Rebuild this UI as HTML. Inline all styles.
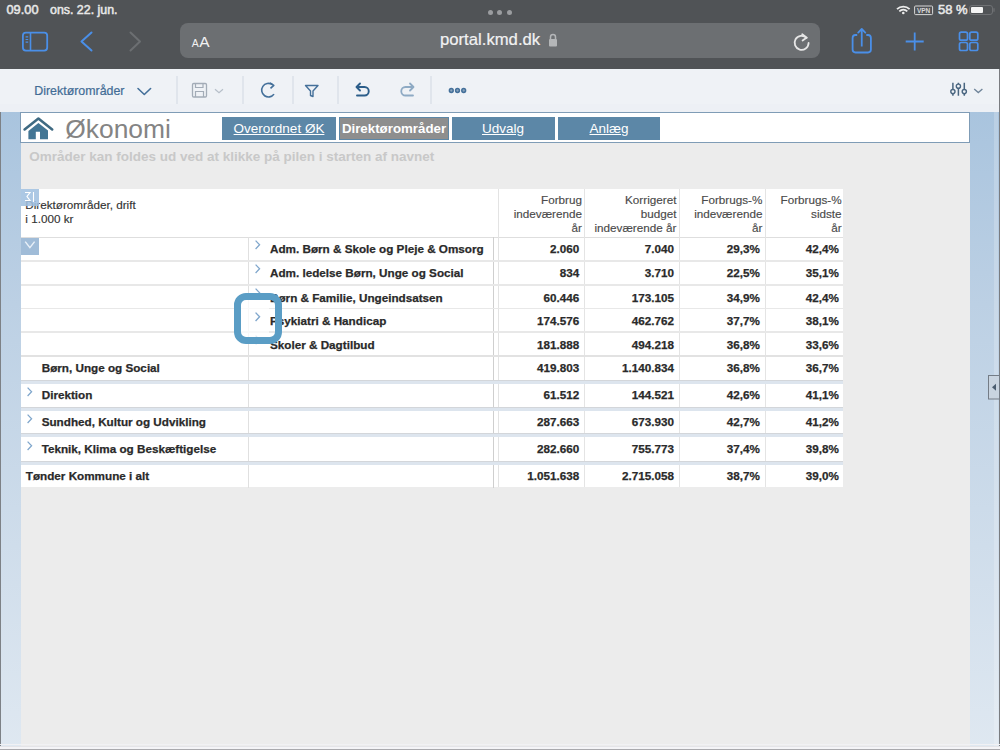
<!DOCTYPE html>
<html><head><meta charset="utf-8">
<style>
*{box-sizing:border-box;margin:0;padding:0}
html,body{width:1000px;height:750px;overflow:hidden;background:#ececec;font-family:"Liberation Sans",sans-serif}
.a{position:absolute}
.t{position:absolute;white-space:nowrap;line-height:1}
svg{overflow:visible}
</style></head><body>
<div class="a" style="left:0px;top:0px;width:1000px;height:69px;background:#505356"></div>
<div class="t" style="left:6.5px;top:3.96px;font-size:12.8px;color:#e8e8e8;font-weight:normal;-webkit-text-stroke:0.5px #e8e8e8">09.00</div>
<div class="t" style="left:50px;top:4.30px;font-size:12.4px;color:#e8e8e8;font-weight:normal;-webkit-text-stroke:0.5px #e8e8e8">ons. 22. jun.</div>
<div class="a" style="left:487.5px;top:9.5px;width:5px;height:5px;background:#9b9da0;border-radius:50%"></div>
<div class="a" style="left:497.0px;top:9.5px;width:5px;height:5px;background:#9b9da0;border-radius:50%"></div>
<div class="a" style="left:506.5px;top:9.5px;width:5px;height:5px;background:#9b9da0;border-radius:50%"></div>
<svg class="a" style="left:890px;top:0" width="110" height="20" viewBox="0 0 110 20">
<path d="M7,9.2 A9,9 0 0 1 19.6,9.2" stroke="#ececec" stroke-width="1.8" fill="none"/>
<path d="M9.3,11.3 A6,6 0 0 1 17.3,11.3" stroke="#ececec" stroke-width="1.8" fill="none"/>
<circle cx="13.3" cy="13" r="1.3" fill="#ececec"/>
<rect x="24.6" y="6" width="18" height="8.6" rx="1" stroke="#d8d8d8" stroke-width="1" fill="none"/>
<text x="33.6" y="12.8" font-family="Liberation Sans" font-size="6.5" font-weight="bold" fill="#d8d8d8" text-anchor="middle">VPN</text>
<rect x="79.5" y="5.5" width="23" height="9" rx="2.5" stroke="#6f7174" stroke-width="1" fill="none"/>
<rect x="81" y="7" width="12" height="6" rx="1" fill="#f4f4f4"/>
<path d="M104,8.3 v3.4" stroke="#6f7174" stroke-width="1.2"/>
</svg>
<div class="t" style="left:938px;top:3.30px;font-size:13.0px;color:#e8e8e8;font-weight:normal;-webkit-text-stroke:0.5px #e8e8e8">58 %</div>
<div class="a" style="left:180px;top:23px;width:640px;height:35px;background:#6c6f72;border-radius:8px"></div>
<div class="t" style="left:191.7px;top:38.41px;font-size:10.5px;color:#f2f2f2;font-weight:normal;">A</div>
<div class="t" style="left:199.3px;top:34.18px;font-size:15.5px;color:#f2f2f2;font-weight:normal;">A</div>
<div class="t" style="left:440px;top:32.46px;font-size:16.7px;color:#f2f2f2;font-weight:normal;-webkit-text-stroke:0.2px #f2f2f2">portal.kmd.dk</div>
<svg class="a" style="left:546px;top:32px" width="14" height="16" viewBox="0 0 14 16">
<path d="M4.5,7 V5 A2.5,2.5 0 0 1 9.5,5 V7" stroke="#b4b6b8" stroke-width="1.5" fill="none"/>
<rect x="3" y="7" width="8" height="7.5" rx="1" fill="#b4b6b8"/></svg>
<svg class="a" style="left:790px;top:31px" width="24" height="24" viewBox="0 0 24 24">
<path d="M16.5,6.8 A7,7 0 1 0 18.6,12" stroke="#e6e6e6" stroke-width="1.8" fill="none" stroke-linecap="round"/>
<path d="M12.2,3.2 L16.8,6.6 L12.6,9.6" stroke="#e6e6e6" stroke-width="1.8" fill="none" stroke-linecap="round" stroke-linejoin="round"/>
</svg>
<svg class="a" style="left:20px;top:29px" width="30" height="24" viewBox="0 0 30 24">
<rect x="2.9" y="3.6" width="24.3" height="18" rx="3" stroke="#4a8fe8" stroke-width="1.8" fill="none"/>
<path d="M10.5,3.6 V21.6" stroke="#4a8fe8" stroke-width="1.6"/>
<path d="M5.6,7.8 h2.6 M5.6,10.5 h2.6 M5.6,13.2 h2.6" stroke="#4a8fe8" stroke-width="1.2"/>
</svg>
<svg class="a" style="left:76px;top:29px" width="70" height="25" viewBox="0 0 70 25">
<path d="M15.5,3.5 L5.5,12.5 L15.5,21.5" stroke="#4a8fe8" stroke-width="2" fill="none" stroke-linecap="round" stroke-linejoin="round"/>
<path d="M54.5,3.5 L64,12.5 L54.5,21.5" stroke="#6c6f72" stroke-width="2" fill="none" stroke-linecap="round" stroke-linejoin="round"/>
</svg>
<svg class="a" style="left:845px;top:24px" width="140" height="34" viewBox="0 0 140 34">
<path d="M12.2,11 H10.5 Q7.6,11 7.6,13.9 V25.6 Q7.6,28.5 10.5,28.5 H23 Q25.9,28.5 25.9,25.6 V13.9 Q25.9,11 23,11 H21.3" stroke="#4a8fe8" stroke-width="1.8" fill="none"/>
<path d="M16.75,5.2 V22.5" stroke="#4a8fe8" stroke-width="1.8"/>
<path d="M13.2,8.6 L16.75,5 L20.3,8.6" stroke="#4a8fe8" stroke-width="1.8" fill="none" stroke-linecap="round" stroke-linejoin="round"/>
<path d="M69.7,8.5 V26.5 M60.7,17.5 H78.7" stroke="#4a8fe8" stroke-width="1.8"/>
<rect x="114.5" y="8.2" width="8" height="8" rx="1.8" stroke="#4a8fe8" stroke-width="1.7" fill="none"/>
<rect x="124.8" y="8.2" width="8" height="8" rx="1.8" stroke="#4a8fe8" stroke-width="1.7" fill="none"/>
<rect x="114.5" y="18.5" width="8" height="8" rx="1.8" stroke="#4a8fe8" stroke-width="1.7" fill="none"/>
<rect x="124.8" y="18.5" width="8" height="8" rx="1.8" stroke="#4a8fe8" stroke-width="1.7" fill="none"/>
</svg>
<div class="a" style="left:0px;top:69px;width:1000px;height:43px;background:#eff2f6"></div>
<div class="a" style="left:0px;top:104px;width:1000px;height:8px;background:#edf0f5"></div>
<div class="t" style="left:34.3px;top:84.90px;font-size:12.4px;color:#426c95;font-weight:normal;-webkit-text-stroke:0.2px #426c95">Direktørområder</div>
<svg class="a" style="left:130px;top:80px" width="360" height="24" viewBox="0 0 360 24">
<path d="M8,8.5 L14.3,14.5 L20.6,8.5" stroke="#44709a" stroke-width="1.6" fill="none" stroke-linecap="round" stroke-linejoin="round"/>
<rect x="62.5" y="3.5" width="14" height="13.5" rx="1.2" stroke="#a3acb7" stroke-width="1.3" fill="none"/>
<path d="M65.5,3.5 V7.5 H73 V3.5 M65.5,17 V11.5 H73.5 V17" stroke="#a3acb7" stroke-width="1.2" fill="none"/>
<path d="M85,9.2 L89,12.8 L93,9.2" stroke="#b7bfc9" stroke-width="1.2" fill="none"/>
<path d="M143.2,5.6 A6.8,6.8 0 1 0 143.3,15.4" stroke="#44709a" stroke-width="1.6" fill="none" transform="rotate(-10 136.3 10.6)"/>
<path d="M140,2.8 L143.8,5.3 L140.5,8.4" stroke="#44709a" stroke-width="1.6" fill="none" stroke-linejoin="round"/>
<path d="M175.5,5.5 H188 L183,11 V16.5 L180.5,15.5 V11 Z" stroke="#44709a" stroke-width="1.4" fill="none" stroke-linejoin="round"/>
<path d="M230,3.5 L226.5,7 L230,10.5" stroke="#2c5e8a" stroke-width="1.9" fill="none" stroke-linecap="round" stroke-linejoin="round"/>
<path d="M227,7 H234.5 A4.2,4.2 0 0 1 234.5,15.5 H227" stroke="#2c5e8a" stroke-width="1.9" fill="none" stroke-linecap="round"/>
<path d="M280,3.5 L283.5,7 L280,10.5" stroke="#8eaac4" stroke-width="1.8" fill="none" stroke-linecap="round" stroke-linejoin="round"/>
<path d="M283,7 H275.5 A4.2,4.2 0 0 0 275.5,15.5 H283" stroke="#8eaac4" stroke-width="1.8" fill="none" stroke-linecap="round"/>
<circle cx="321.3" cy="10.5" r="1.9" stroke="#44709a" stroke-width="1.5" fill="#8aa4bd"/>
<circle cx="327.5" cy="10.5" r="1.9" stroke="#44709a" stroke-width="1.5" fill="#8aa4bd"/>
<circle cx="333.7" cy="10.5" r="1.9" stroke="#44709a" stroke-width="1.5" fill="#8aa4bd"/>
</svg>
<div class="a" style="left:176px;top:76px;width:2px;height:28px;background:#e0e5ec"></div>
<div class="a" style="left:241.5px;top:76px;width:2px;height:28px;background:#e0e5ec"></div>
<div class="a" style="left:291.8px;top:76px;width:2px;height:28px;background:#e0e5ec"></div>
<div class="a" style="left:336.5px;top:76px;width:2px;height:28px;background:#e0e5ec"></div>
<div class="a" style="left:430px;top:76px;width:2px;height:28px;background:#e0e5ec"></div>
<svg class="a" style="left:945px;top:78px" width="45" height="24" viewBox="0 0 45 24">
<path d="M7.9,4.8 V17.8 M13.4,4.8 V17.8 M19.3,4.8 V17.8" stroke="#4a6680" stroke-width="1.5"/>
<circle cx="7.9" cy="13.6" r="2.1" fill="#eff2f6" stroke="#4a6680" stroke-width="1.4"/>
<circle cx="13.4" cy="8.2" r="2.1" fill="#eff2f6" stroke="#4a6680" stroke-width="1.4"/>
<circle cx="19.3" cy="13.6" r="2.1" fill="#eff2f6" stroke="#4a6680" stroke-width="1.4"/>
<path d="M29.2,11 L33.3,14.6 L37.4,11" stroke="#6f8499" stroke-width="1.3" fill="none"/>
</svg>
<div class="a" style="left:0px;top:112px;width:1000px;height:638px;background:#ececec"></div>
<div class="a" style="left:0px;top:112px;width:20.5px;height:638px;background:linear-gradient(#a9c4de 0%,#bcd0e4 30%,#dfe8f1 100%)"></div>
<div class="a" style="left:0px;top:112px;width:1.2px;height:638px;background:#7d8186"></div>
<div class="a" style="left:969.5px;top:112px;width:30.5px;height:638px;background:linear-gradient(#a9c4de 0%,#bcd0e4 30%,#dfe8f1 100%)"></div>
<div class="a" style="left:993.5px;top:112px;width:4px;height:638px;background:rgba(255,255,255,0.2)"></div>
<div class="a" style="left:998.5px;top:69px;width:1.5px;height:681px;background:#7a7c80"></div>
<svg class="a" style="left:984px;top:372px" width="16" height="28" viewBox="0 0 16 28">
<rect x="4.5" y="3.5" width="11" height="23.5" fill="#c9d4e0" stroke="#747c86" stroke-width="1"/>
<path d="M8,15.3 L12,11.8 V18.8 Z" fill="#4b5d70"/></svg>
<div class="a" style="left:20px;top:112px;width:950px;height:31px;background:#fff;border:1.3px solid #7f9cb6"></div>
<svg class="a" style="left:22px;top:114px" width="34" height="28" viewBox="0 0 34 28">
<path d="M2.6,15.4 L16.4,4.6 L30.2,15.4" stroke="#3f6a82" stroke-width="2.6" fill="none" stroke-linejoin="round" stroke-linecap="round"/>
<path d="M6.4,17 L16.4,9 L26,16.6 V25.2 H18 V17.8 H13.8 V25.2 H6.4 Z" fill="#437594"/>
</svg>
<div class="t" style="left:65.3px;top:115.65px;font-size:26.4px;color:#848484;font-weight:normal;">Økonomi</div>
<div class="a" style="left:222px;top:117px;width:114px;height:23px;background:#5c87a7"></div>
<div class="t" style="left:-21px;width:600px;text-align:center;top:121.57px;font-size:13.5px;color:#ffffff;font-weight:normal;text-decoration:underline;text-underline-offset:1px">Overordnet ØK</div>
<div class="a" style="left:339px;top:117px;width:109.5px;height:23px;background:#8e8e8e;border:1px solid #5c87a7;border-bottom-color:#5c87a7"></div>
<div class="t" style="left:94px;width:600px;text-align:center;top:121.74px;font-size:13.3px;color:#ffffff;font-weight:bold;">Direktørområder</div>
<div class="a" style="left:452px;top:117px;width:102.5px;height:23px;background:#5c87a7"></div>
<div class="t" style="left:203px;width:600px;text-align:center;top:121.57px;font-size:13.5px;color:#ffffff;font-weight:normal;text-decoration:underline;text-underline-offset:1px">Udvalg</div>
<div class="a" style="left:557.5px;top:117px;width:102.5px;height:23px;background:#5c87a7"></div>
<div class="t" style="left:309px;width:600px;text-align:center;top:121.57px;font-size:13.5px;color:#ffffff;font-weight:normal;text-decoration:underline;text-underline-offset:1px">Anlæg</div>
<div class="t" style="left:29.2px;top:149.57px;font-size:13.5px;color:#c8c8c8;font-weight:bold;">Områder kan foldes ud ved at klikke på pilen i starten af navnet</div>
<div class="a" style="left:20.5px;top:188.8px;width:822.8px;height:298.7px;background:#fff"></div>
<div class="t" style="left:25.3px;top:198.80px;font-size:11.7px;color:#333;font-weight:normal;-webkit-text-stroke:0.15px #333">Direktørområder, drift</div>
<div class="t" style="left:25.3px;top:213.40px;font-size:11.7px;color:#333;font-weight:normal;-webkit-text-stroke:0.15px #333">i 1.000 kr</div>
<div class="a" style="left:20.5px;top:189px;width:18px;height:16.5px;background:rgba(160,192,224,0.88)"></div>
<svg class="a" style="left:20.5px;top:189px" width="18" height="17" viewBox="0 0 18 17">
<path d="M4,3.5 H9 L6,7.5 L9,11.5 H4" stroke="#fff" stroke-width="1.2" fill="none"/>
<path d="M12.5,3 V13" stroke="#fff" stroke-width="1.1"/></svg>
<div class="t" style="left:-18px;width:600px;text-align:right;top:193.50px;font-size:11.7px;color:#4a4a4a;font-weight:normal;-webkit-text-stroke:0.15px #4a4a4a">Forbrug</div>
<div class="t" style="left:-18px;width:600px;text-align:right;top:207.60px;font-size:11.7px;color:#4a4a4a;font-weight:normal;-webkit-text-stroke:0.15px #4a4a4a">indeværende</div>
<div class="t" style="left:-18px;width:600px;text-align:right;top:221.70px;font-size:11.7px;color:#4a4a4a;font-weight:normal;-webkit-text-stroke:0.15px #4a4a4a">år</div>
<div class="t" style="left:76.39999999999998px;width:600px;text-align:right;top:193.50px;font-size:11.7px;color:#4a4a4a;font-weight:normal;-webkit-text-stroke:0.15px #4a4a4a">Korrigeret</div>
<div class="t" style="left:76.39999999999998px;width:600px;text-align:right;top:207.60px;font-size:11.7px;color:#4a4a4a;font-weight:normal;-webkit-text-stroke:0.15px #4a4a4a">budget</div>
<div class="t" style="left:76.39999999999998px;width:600px;text-align:right;top:221.70px;font-size:11.7px;color:#4a4a4a;font-weight:normal;-webkit-text-stroke:0.15px #4a4a4a">indeværende år</div>
<div class="t" style="left:162.39999999999998px;width:600px;text-align:right;top:193.50px;font-size:11.7px;color:#4a4a4a;font-weight:normal;-webkit-text-stroke:0.15px #4a4a4a">Forbrugs-%</div>
<div class="t" style="left:162.39999999999998px;width:600px;text-align:right;top:207.60px;font-size:11.7px;color:#4a4a4a;font-weight:normal;-webkit-text-stroke:0.15px #4a4a4a">indeværende</div>
<div class="t" style="left:162.39999999999998px;width:600px;text-align:right;top:221.70px;font-size:11.7px;color:#4a4a4a;font-weight:normal;-webkit-text-stroke:0.15px #4a4a4a">år</div>
<div class="t" style="left:241.60000000000002px;width:600px;text-align:right;top:193.50px;font-size:11.7px;color:#4a4a4a;font-weight:normal;-webkit-text-stroke:0.15px #4a4a4a">Forbrugs-%</div>
<div class="t" style="left:241.60000000000002px;width:600px;text-align:right;top:207.60px;font-size:11.7px;color:#4a4a4a;font-weight:normal;-webkit-text-stroke:0.15px #4a4a4a">sidste</div>
<div class="t" style="left:241.60000000000002px;width:600px;text-align:right;top:221.70px;font-size:11.7px;color:#4a4a4a;font-weight:normal;-webkit-text-stroke:0.15px #4a4a4a">år</div>
<div class="a" style="left:20.5px;top:236.5px;width:822.8px;height:1.6px;background:#dedede"></div>
<div class="a" style="left:497.6px;top:188.8px;width:1px;height:298.7px;background:#e3e3e3"></div>
<div class="a" style="left:583.8px;top:188.8px;width:1.2px;height:298.7px;background:#e4e4e4"></div>
<div class="a" style="left:678.7px;top:188.8px;width:1.2px;height:298.7px;background:#e4e4e4"></div>
<div class="a" style="left:764.6px;top:188.8px;width:1.2px;height:298.7px;background:#e4e4e4"></div>
<div class="a" style="left:492.6px;top:237px;width:1px;height:250.5px;background:#cfcfcf"></div>
<div class="a" style="left:247.7px;top:237px;width:1px;height:250.5px;background:#e0e0e0"></div>
<svg class="a" style="left:253.5px;top:240px" width="8" height="10" viewBox="0 0 8 10"><path d="M1.6,0.6 L5.6,4.8 L1.6,9" stroke="#7fa6cc" stroke-width="1.25" fill="none"/></svg>
<div class="t" style="left:270px;top:243.40px;font-size:11.7px;color:#2a2a2a;font-weight:bold;-webkit-text-stroke:0.25px #2a2a2a">Adm. Børn &amp; Skole og Pleje &amp; Omsorg</div>
<div class="t" style="left:-20.799999999999955px;width:600px;text-align:right;top:243.30px;font-size:11.7px;color:#2a2a2a;font-weight:bold;-webkit-text-stroke:0.25px #2a2a2a">2.060</div>
<div class="t" style="left:74px;width:600px;text-align:right;top:243.30px;font-size:11.7px;color:#2a2a2a;font-weight:bold;-webkit-text-stroke:0.25px #2a2a2a">7.040</div>
<div class="t" style="left:160px;width:600px;text-align:right;top:243.30px;font-size:11.7px;color:#2a2a2a;font-weight:bold;-webkit-text-stroke:0.25px #2a2a2a">29,3%</div>
<div class="t" style="left:239px;width:600px;text-align:right;top:243.30px;font-size:11.7px;color:#2a2a2a;font-weight:bold;-webkit-text-stroke:0.25px #2a2a2a">42,4%</div>
<div class="a" style="left:20.5px;top:260px;width:822.8px;height:1.5px;background:#e8e8e8"></div>
<svg class="a" style="left:253.5px;top:264px" width="8" height="10" viewBox="0 0 8 10"><path d="M1.6,0.6 L5.6,4.8 L1.6,9" stroke="#7fa6cc" stroke-width="1.25" fill="none"/></svg>
<div class="t" style="left:270px;top:267.40px;font-size:11.7px;color:#2a2a2a;font-weight:bold;-webkit-text-stroke:0.25px #2a2a2a">Adm. ledelse Børn, Unge og Social</div>
<div class="t" style="left:-20.799999999999955px;width:600px;text-align:right;top:267.30px;font-size:11.7px;color:#2a2a2a;font-weight:bold;-webkit-text-stroke:0.25px #2a2a2a">834</div>
<div class="t" style="left:74px;width:600px;text-align:right;top:267.30px;font-size:11.7px;color:#2a2a2a;font-weight:bold;-webkit-text-stroke:0.25px #2a2a2a">3.710</div>
<div class="t" style="left:160px;width:600px;text-align:right;top:267.30px;font-size:11.7px;color:#2a2a2a;font-weight:bold;-webkit-text-stroke:0.25px #2a2a2a">22,5%</div>
<div class="t" style="left:239px;width:600px;text-align:right;top:267.30px;font-size:11.7px;color:#2a2a2a;font-weight:bold;-webkit-text-stroke:0.25px #2a2a2a">35,1%</div>
<div class="a" style="left:20.5px;top:284.2px;width:822.8px;height:1.5px;background:#e8e8e8"></div>
<svg class="a" style="left:253.5px;top:288.2px" width="8" height="10" viewBox="0 0 8 10"><path d="M1.6,0.6 L5.6,4.8 L1.6,9" stroke="#7fa6cc" stroke-width="1.25" fill="none"/></svg>
<div class="t" style="left:270px;top:291.60px;font-size:11.7px;color:#2a2a2a;font-weight:bold;-webkit-text-stroke:0.25px #2a2a2a">Børn &amp; Familie, Ungeindsatsen</div>
<div class="t" style="left:-20.799999999999955px;width:600px;text-align:right;top:291.50px;font-size:11.7px;color:#2a2a2a;font-weight:bold;-webkit-text-stroke:0.25px #2a2a2a">60.446</div>
<div class="t" style="left:74px;width:600px;text-align:right;top:291.50px;font-size:11.7px;color:#2a2a2a;font-weight:bold;-webkit-text-stroke:0.25px #2a2a2a">173.105</div>
<div class="t" style="left:160px;width:600px;text-align:right;top:291.50px;font-size:11.7px;color:#2a2a2a;font-weight:bold;-webkit-text-stroke:0.25px #2a2a2a">34,9%</div>
<div class="t" style="left:239px;width:600px;text-align:right;top:291.50px;font-size:11.7px;color:#2a2a2a;font-weight:bold;-webkit-text-stroke:0.25px #2a2a2a">42,4%</div>
<div class="a" style="left:20.5px;top:307.5px;width:822.8px;height:1.5px;background:#e8e8e8"></div>
<svg class="a" style="left:253.5px;top:311.5px" width="8" height="10" viewBox="0 0 8 10"><path d="M1.6,0.6 L5.6,4.8 L1.6,9" stroke="#7fa6cc" stroke-width="1.25" fill="none"/></svg>
<div class="t" style="left:270px;top:314.90px;font-size:11.7px;color:#2a2a2a;font-weight:bold;-webkit-text-stroke:0.25px #2a2a2a">Psykiatri &amp; Handicap</div>
<div class="t" style="left:-20.799999999999955px;width:600px;text-align:right;top:314.80px;font-size:11.7px;color:#2a2a2a;font-weight:bold;-webkit-text-stroke:0.25px #2a2a2a">174.576</div>
<div class="t" style="left:74px;width:600px;text-align:right;top:314.80px;font-size:11.7px;color:#2a2a2a;font-weight:bold;-webkit-text-stroke:0.25px #2a2a2a">462.762</div>
<div class="t" style="left:160px;width:600px;text-align:right;top:314.80px;font-size:11.7px;color:#2a2a2a;font-weight:bold;-webkit-text-stroke:0.25px #2a2a2a">37,7%</div>
<div class="t" style="left:239px;width:600px;text-align:right;top:314.80px;font-size:11.7px;color:#2a2a2a;font-weight:bold;-webkit-text-stroke:0.25px #2a2a2a">38,1%</div>
<div class="a" style="left:20.5px;top:331.3px;width:822.8px;height:1.5px;background:#e8e8e8"></div>
<svg class="a" style="left:253.5px;top:335.3px" width="8" height="10" viewBox="0 0 8 10"><path d="M1.6,0.6 L5.6,4.8 L1.6,9" stroke="#7fa6cc" stroke-width="1.25" fill="none"/></svg>
<div class="t" style="left:270px;top:338.70px;font-size:11.7px;color:#2a2a2a;font-weight:bold;-webkit-text-stroke:0.25px #2a2a2a">Skoler &amp; Dagtilbud</div>
<div class="t" style="left:-20.799999999999955px;width:600px;text-align:right;top:338.60px;font-size:11.7px;color:#2a2a2a;font-weight:bold;-webkit-text-stroke:0.25px #2a2a2a">181.888</div>
<div class="t" style="left:74px;width:600px;text-align:right;top:338.60px;font-size:11.7px;color:#2a2a2a;font-weight:bold;-webkit-text-stroke:0.25px #2a2a2a">494.218</div>
<div class="t" style="left:160px;width:600px;text-align:right;top:338.60px;font-size:11.7px;color:#2a2a2a;font-weight:bold;-webkit-text-stroke:0.25px #2a2a2a">36,8%</div>
<div class="t" style="left:239px;width:600px;text-align:right;top:338.60px;font-size:11.7px;color:#2a2a2a;font-weight:bold;-webkit-text-stroke:0.25px #2a2a2a">33,6%</div>
<div class="a" style="left:20.5px;top:238px;width:18px;height:17.3px;background:#a0bcd8"></div>
<svg class="a" style="left:20.5px;top:238px" width="18" height="17" viewBox="0 0 18 17">
<path d="M4.2,3.6 L8.9,9.6 L13.6,3.6" stroke="#e8f0f8" stroke-width="1.5" fill="none"/></svg>
<div class="a" style="left:20.5px;top:355.3px;width:822.8px;height:1.5px;background:#e2e2e2"></div>
<div class="t" style="left:41.7px;top:361.70px;font-size:11.7px;color:#2a2a2a;font-weight:bold;-webkit-text-stroke:0.25px #2a2a2a">Børn, Unge og Social</div>
<div class="t" style="left:-20.799999999999955px;width:600px;text-align:right;top:361.70px;font-size:11.7px;color:#2a2a2a;font-weight:bold;-webkit-text-stroke:0.25px #2a2a2a">419.803</div>
<div class="t" style="left:74px;width:600px;text-align:right;top:361.70px;font-size:11.7px;color:#2a2a2a;font-weight:bold;-webkit-text-stroke:0.25px #2a2a2a">1.140.834</div>
<div class="t" style="left:160px;width:600px;text-align:right;top:361.70px;font-size:11.7px;color:#2a2a2a;font-weight:bold;-webkit-text-stroke:0.25px #2a2a2a">36,8%</div>
<div class="t" style="left:239px;width:600px;text-align:right;top:361.70px;font-size:11.7px;color:#2a2a2a;font-weight:bold;-webkit-text-stroke:0.25px #2a2a2a">36,7%</div>
<div class="a" style="left:20.5px;top:379.5px;width:822.8px;height:4.5px;background:#dde5ee;border-top:1px solid #d3d6da"></div>
<svg class="a" style="left:25.5px;top:387.2px" width="8" height="10" viewBox="0 0 8 10"><path d="M1.6,0.6 L5.6,4.8 L1.6,9" stroke="#7fa6cc" stroke-width="1.25" fill="none"/></svg>
<div class="t" style="left:41.7px;top:389.20px;font-size:11.7px;color:#2a2a2a;font-weight:bold;-webkit-text-stroke:0.25px #2a2a2a">Direktion</div>
<div class="t" style="left:-20.799999999999955px;width:600px;text-align:right;top:389.20px;font-size:11.7px;color:#2a2a2a;font-weight:bold;-webkit-text-stroke:0.25px #2a2a2a">61.512</div>
<div class="t" style="left:74px;width:600px;text-align:right;top:389.20px;font-size:11.7px;color:#2a2a2a;font-weight:bold;-webkit-text-stroke:0.25px #2a2a2a">144.521</div>
<div class="t" style="left:160px;width:600px;text-align:right;top:389.20px;font-size:11.7px;color:#2a2a2a;font-weight:bold;-webkit-text-stroke:0.25px #2a2a2a">42,6%</div>
<div class="t" style="left:239px;width:600px;text-align:right;top:389.20px;font-size:11.7px;color:#2a2a2a;font-weight:bold;-webkit-text-stroke:0.25px #2a2a2a">41,1%</div>
<div class="a" style="left:20.5px;top:406.5px;width:822.8px;height:4.5px;background:#dde5ee;border-top:1px solid #d3d6da"></div>
<svg class="a" style="left:25.5px;top:414.2px" width="8" height="10" viewBox="0 0 8 10"><path d="M1.6,0.6 L5.6,4.8 L1.6,9" stroke="#7fa6cc" stroke-width="1.25" fill="none"/></svg>
<div class="t" style="left:41.7px;top:416.20px;font-size:11.7px;color:#2a2a2a;font-weight:bold;-webkit-text-stroke:0.25px #2a2a2a">Sundhed, Kultur og Udvikling</div>
<div class="t" style="left:-20.799999999999955px;width:600px;text-align:right;top:416.20px;font-size:11.7px;color:#2a2a2a;font-weight:bold;-webkit-text-stroke:0.25px #2a2a2a">287.663</div>
<div class="t" style="left:74px;width:600px;text-align:right;top:416.20px;font-size:11.7px;color:#2a2a2a;font-weight:bold;-webkit-text-stroke:0.25px #2a2a2a">673.930</div>
<div class="t" style="left:160px;width:600px;text-align:right;top:416.20px;font-size:11.7px;color:#2a2a2a;font-weight:bold;-webkit-text-stroke:0.25px #2a2a2a">42,7%</div>
<div class="t" style="left:239px;width:600px;text-align:right;top:416.20px;font-size:11.7px;color:#2a2a2a;font-weight:bold;-webkit-text-stroke:0.25px #2a2a2a">41,2%</div>
<div class="a" style="left:20.5px;top:432.8px;width:822.8px;height:4.5px;background:#dde5ee;border-top:1px solid #d3d6da"></div>
<svg class="a" style="left:25.5px;top:440.5px" width="8" height="10" viewBox="0 0 8 10"><path d="M1.6,0.6 L5.6,4.8 L1.6,9" stroke="#7fa6cc" stroke-width="1.25" fill="none"/></svg>
<div class="t" style="left:41.7px;top:442.50px;font-size:11.7px;color:#2a2a2a;font-weight:bold;-webkit-text-stroke:0.25px #2a2a2a">Teknik, Klima og Beskæftigelse</div>
<div class="t" style="left:-20.799999999999955px;width:600px;text-align:right;top:442.50px;font-size:11.7px;color:#2a2a2a;font-weight:bold;-webkit-text-stroke:0.25px #2a2a2a">282.660</div>
<div class="t" style="left:74px;width:600px;text-align:right;top:442.50px;font-size:11.7px;color:#2a2a2a;font-weight:bold;-webkit-text-stroke:0.25px #2a2a2a">755.773</div>
<div class="t" style="left:160px;width:600px;text-align:right;top:442.50px;font-size:11.7px;color:#2a2a2a;font-weight:bold;-webkit-text-stroke:0.25px #2a2a2a">37,4%</div>
<div class="t" style="left:239px;width:600px;text-align:right;top:442.50px;font-size:11.7px;color:#2a2a2a;font-weight:bold;-webkit-text-stroke:0.25px #2a2a2a">39,8%</div>
<div class="a" style="left:20.5px;top:460.5px;width:822.8px;height:4.5px;background:#dde5ee;border-top:1px solid #d3d6da"></div>
<div class="t" style="left:25.8px;top:470.20px;font-size:11.7px;color:#2a2a2a;font-weight:bold;-webkit-text-stroke:0.25px #2a2a2a">Tønder Kommune i alt</div>
<div class="t" style="left:-20.799999999999955px;width:600px;text-align:right;top:470.20px;font-size:11.7px;color:#2a2a2a;font-weight:bold;-webkit-text-stroke:0.25px #2a2a2a">1.051.638</div>
<div class="t" style="left:74px;width:600px;text-align:right;top:470.20px;font-size:11.7px;color:#2a2a2a;font-weight:bold;-webkit-text-stroke:0.25px #2a2a2a">2.715.058</div>
<div class="t" style="left:160px;width:600px;text-align:right;top:470.20px;font-size:11.7px;color:#2a2a2a;font-weight:bold;-webkit-text-stroke:0.25px #2a2a2a">38,7%</div>
<div class="t" style="left:239px;width:600px;text-align:right;top:470.20px;font-size:11.7px;color:#2a2a2a;font-weight:bold;-webkit-text-stroke:0.25px #2a2a2a">39,0%</div>
<div class="a" style="left:0px;top:744px;width:1000px;height:1.2px;background:#f1f1f4"></div>
<div class="a" style="left:0px;top:745.5px;width:1000px;height:1px;background:#e4e4e8"></div>
<div class="a" style="left:0px;top:747px;width:1000px;height:1.5px;background:#f4f4f7"></div>
<div class="a" style="left:0px;top:748.8px;width:1000px;height:1.2px;background:#a9a9ad"></div>
<div class="a" style="left:240.5px;top:299px;width:28px;height:38px;background:rgba(255,255,255,0.75)"></div>
<svg class="a" style="left:253.5px;top:311.5px" width="8" height="10" viewBox="0 0 8 10"><path d="M1.6,0.6 L5.6,4.8 L1.6,9" stroke="#7fa6cc" stroke-width="1.25" fill="none"/></svg>
<div class="a" style="left:234.2px;top:292.6px;width:48.3px;height:51px;border:7px solid #5a9dc5;border-radius:12px;background:transparent"></div>
</body></html>
